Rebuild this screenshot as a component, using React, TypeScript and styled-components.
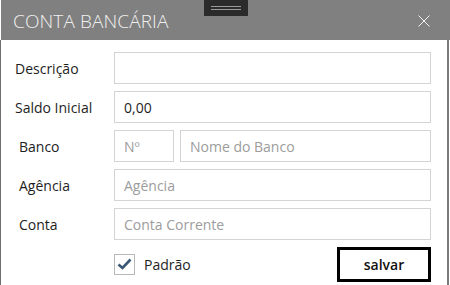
import styled, { createGlobalStyle } from 'styled-components'

const GlobalStyle = createGlobalStyle`
  html, body {
    margin: 0;
    padding: 0;
    background: #ffffff;
  }
  body {
    font-family: "Open Sans", "Noto Sans", sans-serif;
  }
`

const rows = [
  { label: 'Descrição', value: '', placeholder: '', indent: 14 },
  { label: 'Saldo Inicial', value: '0,00', placeholder: '', indent: 14 },
]

const App = () => {
  return (
    <>
      <GlobalStyle />
      <Window>
        <TitleBar>
          <Title>CONTA BANCÁRIA</Title>
          <Handle>
            <HandleLine />
            <HandleLine />
          </Handle>
          <CloseButton aria-label="fechar">
            <svg width="12" height="12" viewBox="0 0 12 12">
              <path d="M0.5 0.5 L11.5 11.5 M11.5 0.5 L0.5 11.5" stroke="#f2f2f2" strokeWidth="1" fill="none" />
            </svg>
          </CloseButton>
        </TitleBar>
        <Body>
          {rows.map((r) => (
            <Row key={r.label}>
              <Label indent={r.indent}>{r.label}</Label>
              <Input defaultValue={r.value} placeholder={r.placeholder} />
            </Row>
          ))}
          <Row>
            <Label indent={18}>Banco</Label>
            <Split>
              <SmallInput placeholder="Nº" />
              <Input placeholder="Nome do Banco" />
            </Split>
          </Row>
          <Row>
            <Label indent={18}>Agência</Label>
            <Input placeholder="Agência" />
          </Row>
          <Row>
            <Label indent={18}>Conta</Label>
            <Input placeholder="Conta Corrente" />
          </Row>
          <Footer>
            <CheckWrap>
              <CheckBox>
                <svg width="15" height="12" viewBox="0 0 15 12">
                  <path d="M1.5 6.5 L5.5 10 L13.5 1.5" stroke="#3b5875" strokeWidth="2.6" fill="none" />
                </svg>
              </CheckBox>
              <CheckText>Padrão</CheckText>
            </CheckWrap>
            <SaveButton>salvar</SaveButton>
          </Footer>
        </Body>
      </Window>
    </>
  )
}

export default App

const Window = styled.div`
  width: 450px;
  height: 285px;
  display: flex;
  flex-direction: column;
  background: #ffffff;
  overflow: hidden;
`

const TitleBar = styled.div`
  position: relative;
  height: 40px;
  flex: none;
  margin-left: 1px;
  background: #808080;
  display: flex;
  align-items: center;
  justify-content: space-between;
  padding: 0 20px 0 12px;
`

const Title = styled.div`
  color: #f0f0f0;
  font-size: 19px;
  font-weight: 300;
  letter-spacing: 0.1px;
  margin-top: 2px;
`

const Handle = styled.div`
  position: absolute;
  left: 203px;
  top: 0;
  width: 44px;
  height: 16px;
  background: #2b2b2b;
  display: flex;
  flex-direction: column;
  justify-content: center;
  align-items: center;
  gap: 2px;
`

const HandleLine = styled.div`
  width: 30px;
  height: 1px;
  background: #9a9a9a;
`

const CloseButton = styled.div`
  width: 12px;
  height: 12px;
  display: flex;
  margin-top: 2px;
`

const Body = styled.div`
  flex: 1;
  display: flex;
  flex-direction: column;
  gap: 7px;
  padding: 12px 16px 0 0;
  border-left: 1px solid #6e6e6e;
  border-right: 2px solid #7a7a7a;
  margin-right: 1px;
`

const Row = styled.div`
  display: flex;
  align-items: center;
  height: 32px;
`

const Label = styled.div<{ indent: number }>`
  width: 113px;
  flex: none;
  box-sizing: border-box;
  padding-left: ${(p) => p.indent}px;
  font-size: 14px;
  color: #1e1e1e;
`

const Input = styled.input`
  flex: 1;
  min-width: 0;
  height: 32px;
  box-sizing: border-box;
  border: 1px solid #d4d4d4;
  padding: 0 9px;
  font-family: "Open Sans", "Noto Sans", sans-serif;
  font-size: 14px;
  color: #1e1e1e;
  outline: none;
  background: #ffffff;

  &::placeholder {
    color: #9c9c9c;
  }
`

const Split = styled.div`
  flex: 1;
  display: flex;
  gap: 6px;
`

const SmallInput = styled(Input)`
  flex: none;
  width: 60px;
`

const Footer = styled.div`
  display: flex;
  align-items: center;
  justify-content: space-between;
  padding-left: 113px;
  margin-top: 0;
`

const CheckWrap = styled.div`
  display: flex;
  align-items: center;
  gap: 9px;
  margin-top: -1px;
`

const CheckBox = styled.div`
  width: 21px;
  height: 21px;
  box-sizing: border-box;
  border: 1px solid #b8b8b8;
  display: flex;
  align-items: center;
  justify-content: center;
`

const CheckText = styled.div`
  font-size: 14px;
  color: #1e1e1e;
`

const SaveButton = styled.button`
  width: 94px;
  height: 35px;
  box-sizing: border-box;
  border: 3px solid #000000;
  background: #ffffff;
  font-family: "Open Sans", "Noto Sans", sans-serif;
  font-size: 14px;
  font-weight: 600;
  color: #111111;
  padding: 0;
`
